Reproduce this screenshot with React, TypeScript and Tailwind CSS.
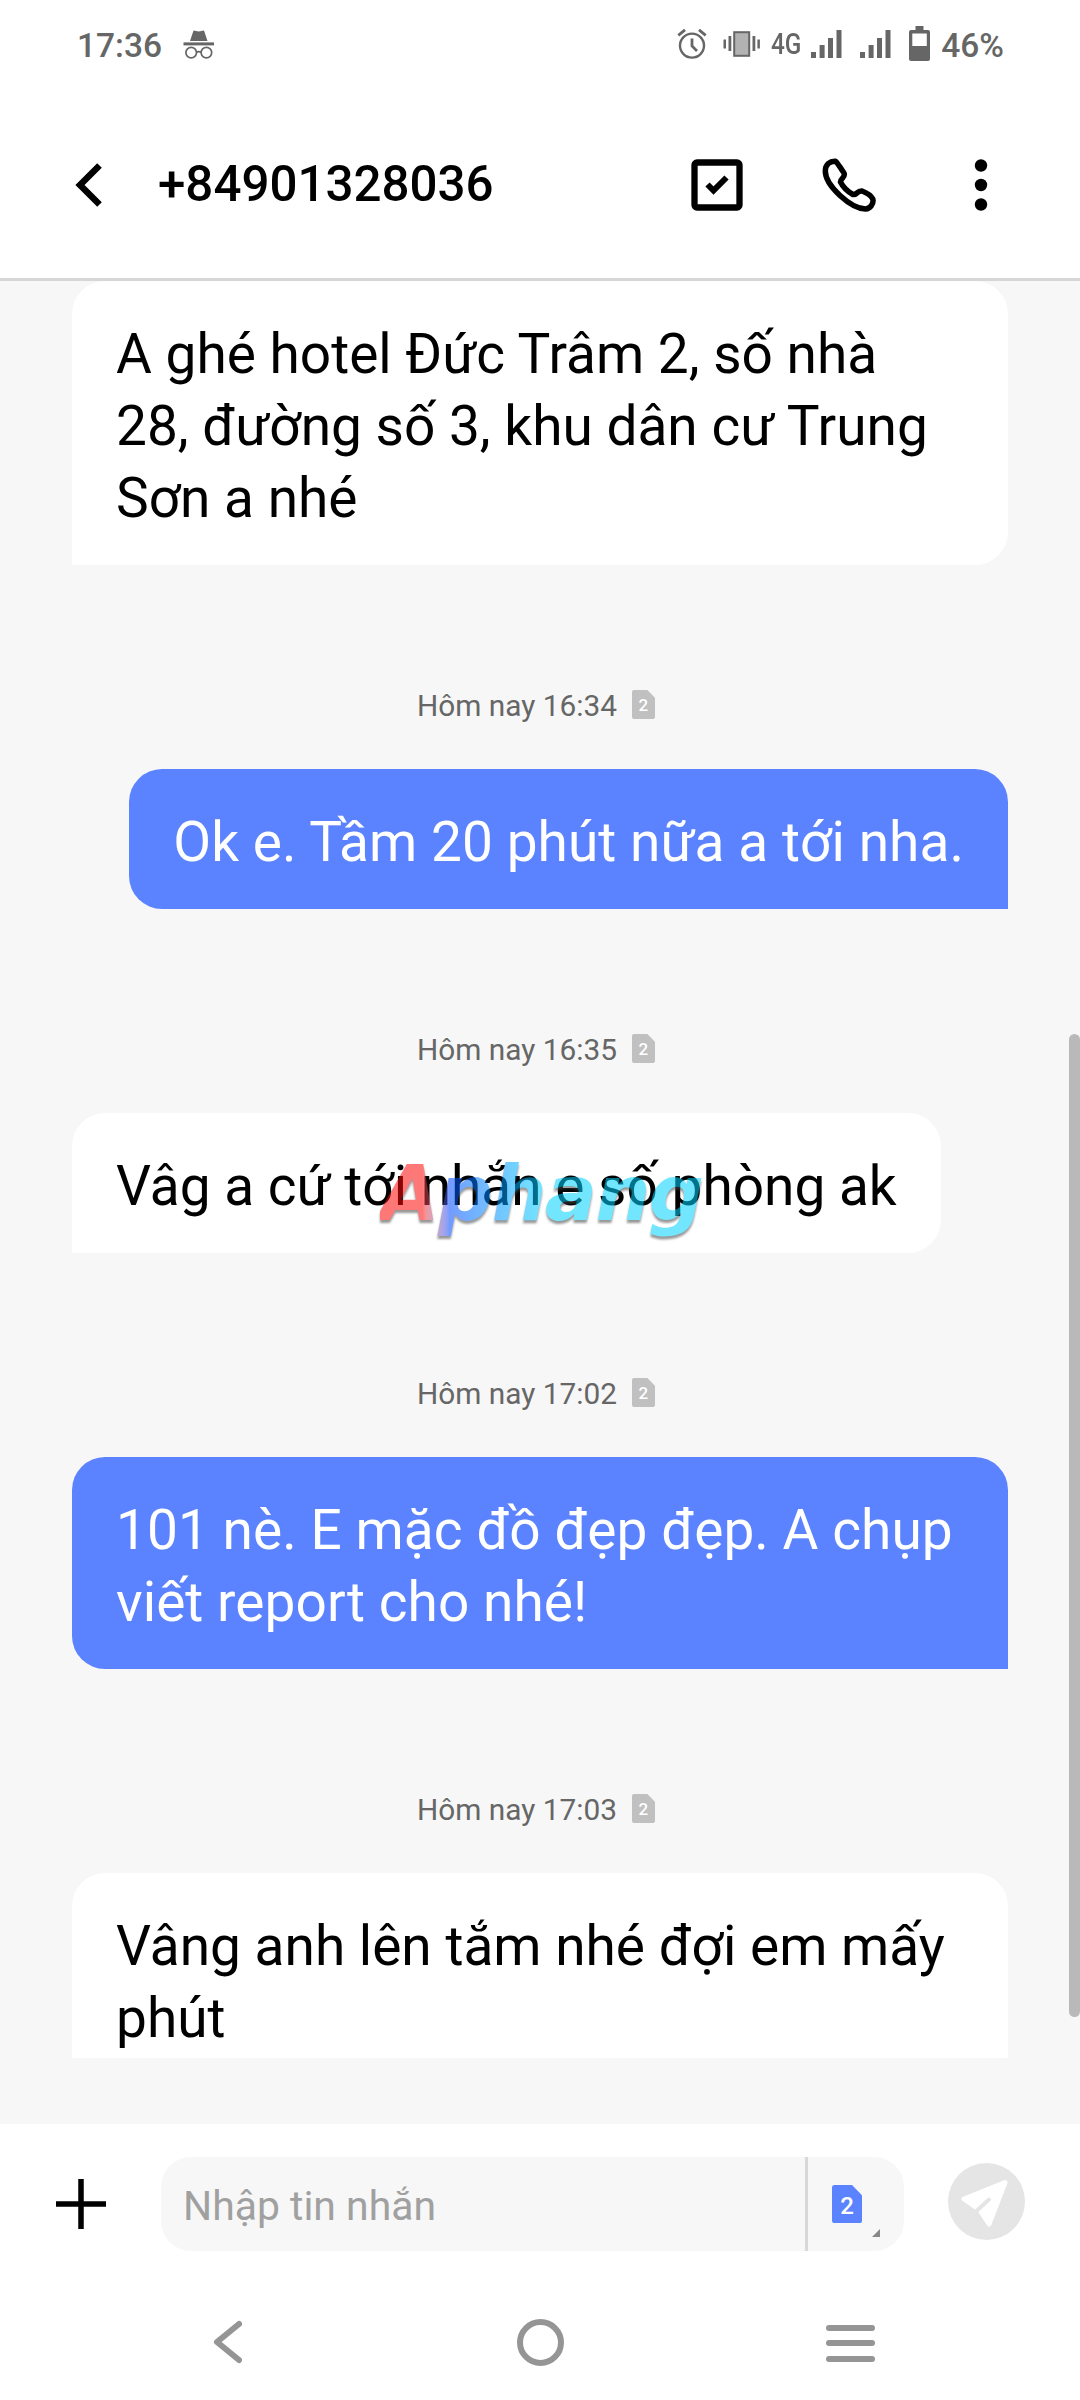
import type { ReactNode } from 'react';

interface Message {
  lines: string[];
  sent: boolean;
  time?: string;
}

const messages: Message[] = [
  { lines: ['A ghé hotel Đức Trâm 2, số nhà', '28, đường số 3, khu dân cư Trung', 'Sơn a nhé'], sent: false },
  { lines: ['Ok e. Tầm 20 phút nữa a tới nha.'], sent: true, time: 'Hôm nay 16:34' },
  { lines: ['Vâg a cứ tới nhắn e số phòng ak'], sent: false, time: 'Hôm nay 16:35' },
  { lines: ['101 nè. E mặc đồ đẹp đẹp. A chụp', 'viết report cho nhé!'], sent: true, time: 'Hôm nay 17:02' },
  { lines: ['Vâng anh lên tắm nhé đợi em mấy', 'phút'], sent: false, time: 'Hôm nay 17:03' },
];

function SimBadge({ className, textClass }: { className: string; textClass: string }) {
  return (
    <span className={`relative flex items-center justify-center ${className}`}>
      <svg viewBox="0 0 24 30" preserveAspectRatio="none" className="absolute inset-0 h-full w-full" fill="currentColor">
        <path d="M2 0h14l8 8v20a2 2 0 0 1-2 2H2a2 2 0 0 1-2-2V2a2 2 0 0 1 2-2Z" />
      </svg>
      <span className={`relative ${textClass}`}>2</span>
    </span>
  );
}

function Signal() {
  return (
    <svg width="31" height="28" viewBox="0 0 31 28" fill="currentColor">
      <rect x="0" y="22" width="5" height="6" />
      <rect x="8.6" y="15" width="5" height="13" />
      <rect x="17" y="8" width="5" height="20" />
      <rect x="25.5" y="0" width="5" height="28" />
    </svg>
  );
}

function StatusBar() {
  return (
    <div className="flex h-[90px] shrink-0 items-center pr-[76px] pl-[77px] text-[#666666]">
      <span className="mt-0.5 text-[33.5px] leading-none font-medium">17:36</span>
      <svg width="32" height="30" viewBox="0 0 32 30" className="ml-[21px]">
        <path d="M10.5 0.5 15.7 1.6 21 0.5 24.5 11H7Z" fill="currentColor" />
        <rect x="0.5" y="12.4" width="30.5" height="3" fill="currentColor" />
        <g fill="none" stroke="currentColor" strokeWidth="1.7">
          <circle cx="8.2" cy="22.6" r="5.3" />
          <circle cx="23.4" cy="22.6" r="5.3" />
          <path d="M13.3 22.2q2.4-1.2 4.9 0" />
        </g>
      </svg>

      <div className="ml-auto flex items-center">
        <svg width="30" height="32" viewBox="0 0 30 32" className="-mt-0.5" fill="none" stroke="currentColor" strokeWidth="2.4">
          <circle cx="15" cy="17.6" r="12" />
          <path d="M15 10.5v7.4l5 5M1.3 7.3 8 1.8M28.7 7.3 22 1.8" strokeWidth="2.8" />
        </svg>
        <svg width="38" height="28" viewBox="0 0 38 28" className="-mt-0.5 ml-4" fill="currentColor">
          <rect x="0.5" y="9.5" width="2.5" height="9" />
          <rect x="5.5" y="6" width="2.8" height="15" />
          <rect x="11.2" y="2.2" width="15" height="23.6" fill="#b2b2b2" stroke="currentColor" strokeWidth="2" />
          <rect x="29.5" y="6" width="2.8" height="15" />
          <rect x="34.4" y="9.5" width="2.5" height="9" />
        </svg>
        <span className="-mt-0.5 ml-[10px] w-[29px] text-[29px] leading-none font-medium">
          <span className="inline-block origin-left scale-x-[.84]">4G</span>
        </span>
        <span className="-mt-0.5 ml-[11px]"><Signal /></span>
        <span className="-mt-0.5 ml-[18px]"><Signal /></span>
        <svg width="21" height="36" viewBox="0 0 21 36" className="-mt-0.5 ml-[18px]">
          <path fill="currentColor" fillRule="evenodd" d="M6.500 0h8v4H19a2 2 0 0 1 2 2v27a2 2 0 0 1-2 2H2a2 2 0 0 1-2-2V6a2 2 0 0 1 2-2h4.500ZM3.300 7.500v12.500h14.500V7.500Z" />
        </svg>
        <span className="mt-0.5 ml-[11px] text-[33.5px] leading-none font-medium">46%</span>
      </div>
    </div>
  );
}

function Header() {
  return (
    <div className="flex h-[191px] shrink-0 items-center border-b-[3px] border-[#d6d6d6] pt-0.5 pl-[75px]">
      <svg width="28" height="44" viewBox="0 0 28 44" fill="none" stroke="#000" strokeWidth="6.500">
        <path d="M24.500 2.500 5 22l19.500 19.500" />
      </svg>
      <h1 className="ml-[55px] w-[520px] text-[49.3px] leading-none font-medium">+84901328036</h1>
      <svg width="52" height="52" viewBox="0 0 52 52" className="ml-[13px]">
        <rect x="3.500" y="3.500" width="45" height="45" rx="2.500" fill="none" stroke="#000" strokeWidth="6.300" />
        <path d="M16.500 25.500l6 6L35.500 18.500" fill="none" stroke="#000" strokeWidth="6" />
      </svg>
      <svg width="54" height="54" viewBox="0 0 54 54" className="ml-[79px]" fill="none" stroke="#000" strokeWidth="5.500" strokeLinejoin="round">
        <path d="M3.300 13C3.300 6.500 8 2.800 13.500 3.200C15.500 4.500 18 9.500 22 15C24 19.500 18 20.500 18.500 24C21.500 30 26.500 34 31 36.500C34.500 37.500 35 32.500 40 33C44 34.500 49 37.500 50.800 41C52 46 48 50.500 43.500 51C29 50.500 3.300 28 3.300 13Z" />
      </svg>
      <svg width="14" height="54" viewBox="0 0 14 54" className="ml-[98px]">
        <circle cx="7" cy="7.500" r="6.200" />
        <circle cx="7" cy="27" r="6.200" />
        <circle cx="7" cy="46.500" r="6.200" />
      </svg>
    </div>
  );
}

function Bubble({ sent, wide, children }: { sent: boolean; wide: boolean; children: ReactNode }) {
  const look = sent
    ? 'self-end rounded-bl-[33px] bg-[#5b82ff] tracking-[0.06px] text-white'
    : 'self-start rounded-br-[33px] bg-white text-black';
  return (
    <div className={`rounded-t-[33px] pt-[37px] pr-[44px] pb-[31px] pl-[44px] text-[55px] leading-[72px] whitespace-nowrap ${look} ${wide ? 'w-[936px]' : ''}`}>
      {children}
    </div>
  );
}

// Translucent site logo, drawn over the conversation
function Watermark() {
  return (
    <div className="absolute top-[874px] left-[380px] font-['DejaVu_Sans'] text-[77px] leading-none font-bold tracking-[-1.5px] italic opacity-55 drop-shadow-[0_3px_1px_#444]">
      <span className="bg-gradient-to-r from-[#ff0a0a] from-13% via-[#0049ff] via-21% to-[#00d2ff] to-50% bg-clip-text pr-2 pb-3 text-transparent">
        Aphang
      </span>
    </div>
  );
}

function Conversation() {
  return (
    <div className="relative h-[1843px] shrink-0 overflow-hidden bg-[#f7f7f7]">
      <div className="flex h-[1777px] flex-col overflow-hidden pr-[72px] pl-[72px]">
        {messages.map((message, index) => (
          <div key={index} className="flex shrink-0 flex-col">
            {message.time && (
              <div className="flex h-[204px] items-start justify-center pt-[125px] pr-[8px]">
                <span className="text-[29.8px] leading-8 text-[#666666]">{message.time}</span>
                <SimBadge className="ml-[15px] h-[29px] w-[23px] text-[#c0c0c0]" textClass="mt-0.5 text-[17px] leading-none font-medium text-white" />
              </div>
            )}
            <Bubble sent={message.sent} wide={message.lines.length > 1}>
              {message.lines.map((line) => (
                <p key={line}>{line}</p>
              ))}
            </Bubble>
          </div>
        ))}
      </div>
      <Watermark />
      <div className="absolute top-[753px] right-0 h-[983px] w-[11px] rounded-full bg-[#b9b9b9]" />
    </div>
  );
}

function Composer() {
  return (
    <div className="flex h-[157px] shrink-0 items-center pl-[56px]">
      <svg width="50" height="50" viewBox="0 0 50 50" className="mt-0.5" fill="none" stroke="#000" strokeWidth="5.500">
        <path d="M25 0v50M0 25h50" />
      </svg>
      <div className="mt-0.5 ml-[55px] flex h-[94px] w-[743px] items-stretch overflow-hidden rounded-[30px] bg-[#f7f7f7]">
        <span className="flex w-[644px] items-center pt-1.5 pl-[22px] text-[40.9px] text-[#a0a0a0]">Nhập tin nhắn</span>
        <div className="relative flex-1 border-l-[3px] border-[#d8d8d8]">
          <SimBadge className="mt-[28px] ml-[24px] h-[38px] w-[30px] text-[#5b82ff]" textClass="mt-1 text-[24px] leading-none font-medium text-white" />
          <svg width="8" height="8" viewBox="0 0 8 8" className="absolute right-[24px] bottom-[14px]">
            <path d="M8 0v8H0Z" fill="#888" />
          </svg>
        </div>
      </div>
      <svg width="77" height="77" viewBox="0 0 77 77" className="-mt-0.5 ml-[44px]">
        <circle cx="38.500" cy="38.500" r="38.500" fill="#e5e5e5" />
        <path d="M16 36 57 19.500 41 61 31.500 46.500 16 36Z" fill="#fff" stroke="#fff" strokeWidth="5" strokeLinejoin="round" />
        <path d="M29 47.500 41 36.500" stroke="#e5e5e5" strokeWidth="4" strokeLinecap="round" />
      </svg>
    </div>
  );
}

function NavBar() {
  return (
    <div className="flex h-[119px] shrink-0 items-center pt-[3px] pl-[212px]">
      <svg width="30" height="46" viewBox="0 0 30 46" fill="none" stroke="#959595" strokeWidth="6" strokeLinecap="round" strokeLinejoin="round">
        <path d="M27 5 5 23l22 18" />
      </svg>
      <span className="ml-[275px] h-[47px] w-[47px] rounded-full border-[6px] border-[#959595]" />
      <div className="mt-0.5 ml-[262px] flex w-[49px] flex-col gap-[9.5px]">
        <span className="h-[6px] rounded-full bg-[#959595]" />
        <span className="h-[6px] rounded-full bg-[#959595]" />
        <span className="h-[6px] rounded-full bg-[#959595]" />
      </div>
    </div>
  );
}

export default function App() {
  return (
    <div className="flex h-[2400px] w-[1080px] flex-col overflow-hidden bg-white font-['Roboto','Noto_Sans',sans-serif] text-black">
      <StatusBar />
      <Header />
      <Conversation />
      <Composer />
      <NavBar />
    </div>
  );
}
